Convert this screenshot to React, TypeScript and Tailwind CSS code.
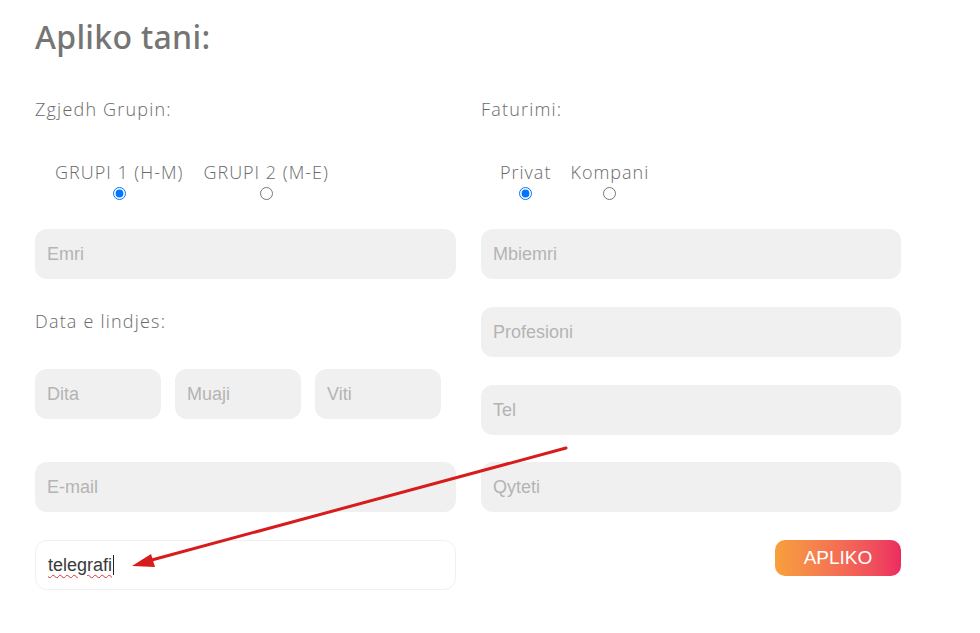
import React from "react";

// ─── Field ────────────────────────────────────────────────────

function Field({
  placeholder,
  className = "",
}: {
  placeholder: string;
  className?: string;
}) {
  return (
    <div
      className={`flex h-[50px] items-center rounded-[12px] bg-[#f0f0f0] px-3 text-[18px] text-[#b4b4b4] ${className}`}
      style={{ fontFamily: '"Liberation Sans", Arial, sans-serif' }}
    >
      {placeholder}
    </div>
  );
}

// ─── Radio option (label above, dot below) ────────────────────

function RadioOption({
  label,
  name,
  checked = false,
}: {
  label: string;
  name: string;
  checked?: boolean;
}) {
  return (
    <label className="inline-flex flex-col items-center">
      <span className="h-[22px] text-[18px] leading-[22px] font-light tracking-[1px] text-[#6a6a6a]">
        {label}
      </span>
      <input
        type="radio"
        name={name}
        defaultChecked={checked}
        className="m-0 mt-[4px] h-[13px] w-[13px]"
      />
    </label>
  );
}

function Label({ children, className = "" }: { children: React.ReactNode; className?: string }) {
  return (
    <div className={`h-6 text-[18px] leading-6 font-light tracking-[1.2px] text-[#6a6a6a] ${className}`}>
      {children}
    </div>
  );
}

export default function App() {
  return (
    <div
      className="relative h-[633px] w-[980px] overflow-hidden bg-white px-[35px] pt-[19px]"
      style={{ fontFamily: '"Open Sans", "Noto Sans", sans-serif' }}
    >
      <h1
        className="h-9 text-[32px] leading-9 font-medium tracking-[0.3px] text-[#757575]"
        style={{ fontFamily: '"Noto Sans", "Open Sans", sans-serif' }}
      >
        Apliko tani:
      </h1>

      <div className="mt-[42px] grid grid-cols-[421px_420px] gap-x-[25px]">
        {/* Left column */}
        <div className="flex flex-col">
          <Label>Zgjedh Grupin:</Label>
          <div className="mt-10 flex gap-5 pl-5">
            <RadioOption name="grupi" label="GRUPI 1 (H-M)" checked />
            <RadioOption name="grupi" label="GRUPI 2 (M-E)" />
          </div>
          <Field placeholder="Emri" className="mt-[29px]" />
          <Label className="mt-[30px]">Data e lindjes:</Label>
          <div className="mt-9 flex gap-[14px]">
            <Field placeholder="Dita" className="w-[126px]" />
            <Field placeholder="Muaji" className="w-[126px]" />
            <Field placeholder="Viti" className="w-[126px]" />
          </div>
          <Field placeholder="E-mail" className="mt-[43px]" />
          <div
            className="mt-[28px] flex h-[50px] items-center rounded-[12px] border border-[#f0f0f0] bg-white px-3 text-[18px] text-[#3a3a3a]"
            style={{ fontFamily: '"Liberation Sans", Arial, sans-serif' }}
          >
            <span className="underline decoration-[#d33] decoration-wavy decoration-1 underline-offset-[3px]">
              telegrafi
            </span>
            <span className="ml-px h-[20px] w-px bg-[#222]" />
          </div>
        </div>

        {/* Right column */}
        <div className="flex flex-col">
          <Label>Faturimi:</Label>
          <div className="mt-10 flex gap-[19px] pl-[19px]">
            <RadioOption name="fatura" label="Privat" checked />
            <RadioOption name="fatura" label="Kompani" />
          </div>
          <Field placeholder="Mbiemri" className="mt-[29px]" />
          <Field placeholder="Profesioni" className="mt-[28px]" />
          <Field placeholder="Tel" className="mt-[28px]" />
          <Field placeholder="Qyteti" className="mt-[27px]" />
          <button
            className="mt-[28px] h-9 w-[126px] self-end rounded-[10px] bg-gradient-to-r from-[#f7a03a] to-[#ec2a60] text-[19px] text-white"
            style={{ fontFamily: '"Liberation Sans", Arial, sans-serif' }}
          >
            APLIKO
          </button>
        </div>
      </div>

      {/* Annotation arrow */}
      <svg
        className="pointer-events-none absolute inset-0"
        width="980"
        height="633"
        viewBox="0 0 980 633"
      >
        <line x1="566" y1="448" x2="148" y2="561" stroke="#d81c1c" strokeWidth="3" strokeLinecap="round" />
        <polygon points="132,566 151,554 155,567" fill="#d81c1c" />
      </svg>
    </div>
  );
}
